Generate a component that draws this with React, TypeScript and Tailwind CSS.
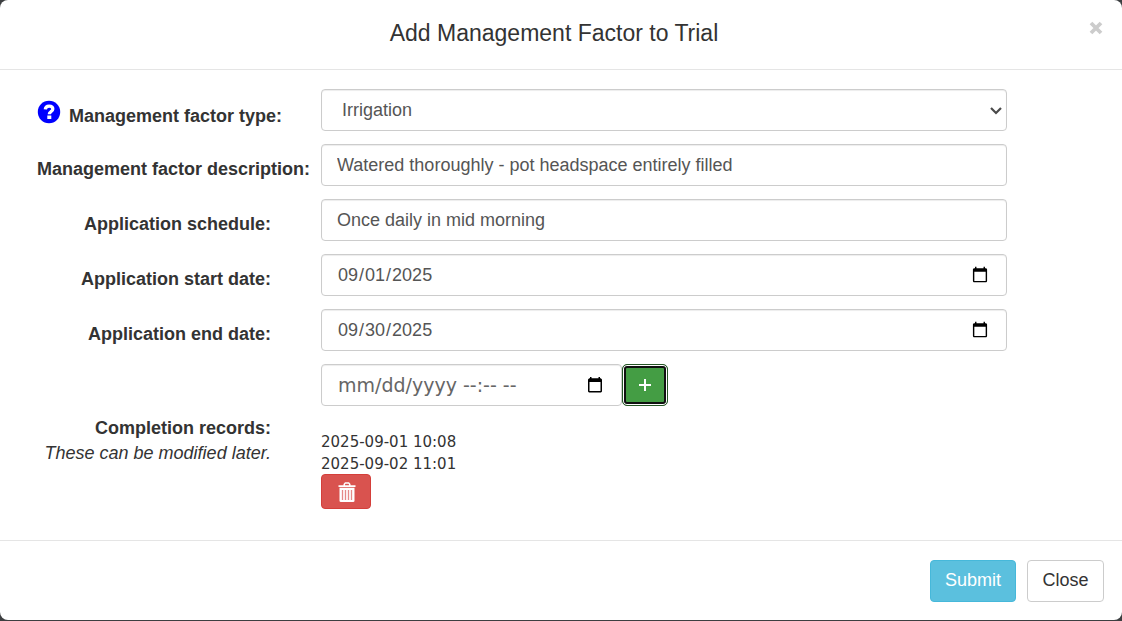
import { useRef, useState, type ReactNode } from "react";

const control =
  "h-[42px] w-full rounded border border-[#cccccc] bg-white px-[15px] text-lg leading-6 text-[#555555] shadow-[inset_0_1px_1px_rgba(0,0,0,0.075)] outline-none";

function Row({ children }: { children: ReactNode }) {
  return <div className="grid grid-cols-[321px_minmax(0,1fr)]">{children}</div>;
}

function FieldLabel({ id, children }: { id: string; children: ReactNode }) {
  return (
    <label htmlFor={id} className="pt-3 pr-[50px] text-right text-lg leading-[26px] font-bold whitespace-nowrap">
      {children}
    </label>
  );
}

function HelpIcon() {
  return (
    <svg viewBox="0 0 24 24" className="size-6" aria-hidden="true">
      <circle cx="12" cy="12" r="11.2" fill="#0000ff" />
      <path
        d="M8.300 9.300C8.500 7 9.900 6.100 12.100 6.100c2.300 0 3.700 1.100 3.700 2.900 0 1.500-.9 2.200-2 2.800-1 .6-1.500 1-1.500 2.500"
        fill="none"
        stroke="#fff"
        strokeWidth="3.300"
      />
      <rect x="10.300" y="15.500" width="4" height="3.500" fill="#fff" />
    </svg>
  );
}

function CalendarIcon() {
  return (
    <svg viewBox="0 0 14 16" className="h-4 w-3.5" aria-hidden="true">
      <path d="M2 0h1.500v1.300h7V0H12v1.300h.8L14 2.500v12L13 15.500H1l-1-1v-12l1.200-1.200H2zM1.500 5v9h11V5z" fill="#000" fillRule="evenodd" />
    </svg>
  );
}

function TrashIcon() {
  return (
    <svg viewBox="0 0 18 20" className="h-5 w-[18px]" aria-hidden="true">
      <path d="M5.500 3.200V2L7 .3h4L12.500 2v1.200h5v1.900H.5V3.200zM7 2.500v.7h4v-.7l-.6-.7H7.600z" fill="#fff" fillRule="evenodd" />
      <path d="M1.500 5.800h15v13.400l-1 .8h-13l-1-.8z" fill="#fff" />
      <path d="M4.500 8v10M7.500 8v10M10.500 8v10M13.500 8v10" stroke="#e58a87" strokeWidth="1.300" />
    </svg>
  );
}

export default function App() {
  const [type, setType] = useState("Irrigation");
  const [records, setRecords] = useState(["2025-09-01 10:08", "2025-09-02 11:01"]);
  const [moment, setMoment] = useState("");
  const momentRef = useRef<HTMLInputElement>(null);

  return (
    <div className="bg-[#3c3f41] pb-px font-['Liberation_Sans',Arial,sans-serif] text-[#333333]">
      <section role="dialog" aria-labelledby="dialog-title" className="rounded-lg bg-white">
        <header className="flex items-start border-b border-[#e5e5e5] pt-[19px] pr-[18px] pb-[22px] pl-[18px]">
          <h4 id="dialog-title" className="flex-1 pl-0.5 text-center text-[23px] leading-7">
            Add Management Factor to Trial
          </h4>
          <button type="button" aria-label="Close dialog" className="flex h-[18px] w-4 items-center justify-center text-[#cccccc]">
            <svg viewBox="0 0 14 14" className="size-3.5" aria-hidden="true">
              <path d="M2 2l10 10M12 2L2 12" stroke="currentColor" strokeWidth="3.800" />
            </svg>
          </button>
        </header>

        <form onSubmit={(e) => e.preventDefault()}>
          <div className="flex flex-col gap-[13px] pt-[19px] pr-[115px] pb-[31px]">
            <Row>
              <div className="flex items-start pt-[11px] pl-[37px]">
                <button type="button" aria-label="Help">
                  <HelpIcon />
                </button>
                <label htmlFor="factor-type" className="pt-1 pl-2 text-lg leading-6 font-bold whitespace-nowrap">
                  Management factor type:
                </label>
              </div>
              <div className="relative">
                <select
                  id="factor-type"
                  value={type}
                  onChange={(e) => setType(e.target.value)}
                  className="h-[42px] w-full appearance-none rounded border border-[#cccccc] bg-white px-5 text-lg leading-6 text-[#555555] shadow-[inset_0_1px_1px_rgba(0,0,0,0.075)] outline-none"
                >
                  <option>Irrigation</option>
                  <option>Fertilizer</option>
                </select>
                <svg viewBox="0 0 12 8" className="pointer-events-none absolute top-[18px] right-[5px] h-2 w-3" aria-hidden="true">
                  <path d="M1 1l5 5 5-5" fill="none" stroke="#4a4a4a" strokeWidth="2.200" />
                </svg>
              </div>
            </Row>
            <Row>
              <label htmlFor="description" className="pt-3 pl-[37px] text-lg leading-[26px] font-bold whitespace-nowrap">
                Management factor description:
              </label>
              <input id="description" type="text" defaultValue="Watered thoroughly - pot headspace entirely filled" className={control} />
            </Row>
            <Row>
              <FieldLabel id="schedule">Application schedule:</FieldLabel>
              <input id="schedule" type="text" defaultValue="Once daily in mid morning" className={control} />
            </Row>
            <Row>
              <FieldLabel id="start-date">Application start date:</FieldLabel>
              <input id="start-date" type="date" defaultValue="2025-09-01" className={control} />
            </Row>
            <Row>
              <FieldLabel id="end-date">Application end date:</FieldLabel>
              <input id="end-date" type="date" defaultValue="2025-09-30" className={control} />
            </Row>
            <Row>
              <div className="pt-[52px] pr-[50px] text-right text-lg leading-[25px]">
                <label htmlFor="completion" className="font-bold">
                  Completion records:
                </label>
                <p className="italic">These can be modified later.</p>
              </div>
              <div>
                <div className="flex items-center">
                  <div className="flex h-[42px] w-[301px] items-center rounded border border-[#cccccc] bg-white pr-[19px] pl-4 shadow-[inset_0_1px_1px_rgba(0,0,0,0.075)]">
                    <input
                      ref={momentRef}
                      id="completion"
                      type="text"
                      placeholder="mm/dd/yyyy --:-- --"
                      value={moment}
                      onChange={(e) => setMoment(e.target.value)}
                      className="min-w-0 flex-1 font-['DejaVu_Sans',Verdana,sans-serif] text-[19px] leading-6 text-[#555555] outline-none placeholder:text-[#666666]"
                    />
                    <button type="button" aria-label="Choose date and time" onClick={() => momentRef.current?.focus()}>
                      <CalendarIcon />
                    </button>
                  </div>
                  <button
                    type="button"
                    aria-label="Add completion record"
                    onClick={() => moment && setRecords([...records, moment])}
                    className="flex h-[42px] w-[46px] items-center justify-center rounded-[5px] border border-[#255625] bg-[#449d44] text-white shadow-[inset_0_0_0_1px_#ffffff,inset_0_0_0_3px_#101010]"
                  >
                    <svg viewBox="0 0 14 14" className="size-3.5" aria-hidden="true">
                      <path d="M7 1v12M1 7h12" stroke="currentColor" strokeWidth="2" />
                    </svg>
                  </button>
                </div>
                <ul className="pt-[25px] pb-px font-['DejaVu_Sans',Verdana,sans-serif] text-[15px] leading-[22px]">
                  {records.map((record) => (
                    <li key={record}>{record}</li>
                  ))}
                </ul>
                <button
                  type="button"
                  aria-label="Delete completion records"
                  onClick={() => setRecords([])}
                  className="-mt-0.5 flex h-[35px] w-[50px] items-center justify-center rounded border border-[#d43f3a] bg-[#d9534f] pl-px"
                >
                  <TrashIcon />
                </button>
              </div>
            </Row>
          </div>

          <footer className="flex justify-end gap-[11px] border-t border-[#e5e5e5] px-[18px] pt-[19px] pb-[18px] text-lg leading-6">
            <button type="submit" className="h-[42px] w-[86px] rounded border border-[#46b8da] bg-[#5bc0de] pb-0.5 text-white">
              Submit
            </button>
            <button type="button" className="h-[42px] w-[77px] rounded border border-[#cccccc] bg-white pb-0.5">
              Close
            </button>
          </footer>
        </form>
      </section>
    </div>
  );
}
